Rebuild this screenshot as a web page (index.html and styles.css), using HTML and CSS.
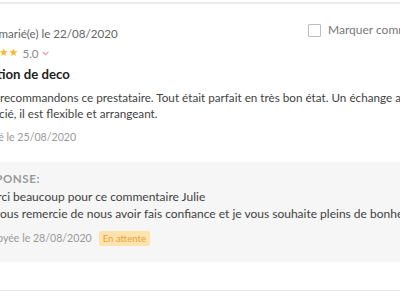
FILE: index.html
```html
<!DOCTYPE html>
<html lang="fr">
<head>
<meta charset="utf-8">
<link rel="stylesheet" href="styles.css">
</head>
<body>
<div class="page">
  <div class="review">
    <div class="header">
      <div class="meta">
        <div class="author">Julie, marié(e) le 22/08/2020</div>
        <div class="rating">
          <span class="stars">★★★★★</span>
          <span class="score">5.0</span>
          <svg class="chev" width="7" height="5" viewBox="0 0 7 5"><path d="M0.6 0.8l2.9 2.9 2.9-2.9" fill="none" stroke="#f095a0" stroke-width="1.1"/></svg>
        </div>
      </div>
      <label class="mark"><span class="box"></span><span>Marquer comme lu</span></label>
    </div>
    <h3 class="title">Location de deco</h3>
    <p class="body">Nous recommandons ce prestataire. Tout était parfait en très bon état. Un échange agréable et<br>apprécié, il est flexible et arrangeant.</p>
    <div class="sent">Envoyé le 25/08/2020</div>
    <div class="response">
      <div class="label">Réponse:</div>
      <p class="rtext first">Merci beaucoup pour ce commentaire Julie</p>
      <p class="rtext">Je vous remercie de nous avoir fais confiance et je vous souhaite pleins de bonheur</p>
      <div class="rsent"><span>Envoyée le 28/08/2020</span><span class="badge">En attente</span></div>
    </div>
  </div>
  <div class="review next"></div>
</div>
</body>
</html>
```
FILE: styles.css
```css
html, body { margin: 0; padding: 0; background: #fff; overflow: hidden; }
body { font-family: Lato, "Open Sans", sans-serif; font-size: 12px; color: #444; padding-top: 2px; }
.page { width: 760px; margin-left: -30px; }
.review { border-top: 2px solid #ededed; padding-top: 21px; }
.review.next { padding: 0; margin-top: 28px; border-top: 1px solid #e6e6e6; }
.header { display: grid; grid-template-columns: 338px 1fr; align-items: start; }
.author { line-height: 18px; color: #666; font-size: 11.6px; }
.rating { display: flex; align-items: center; height: 18px; margin-top: 1px; }
.stars { color: #f4bb2a; font-family: "DejaVu Sans", sans-serif; font-size: 10.8px; line-height: 18px; }
.score { color: #888; font-size: 11.6px; margin-left: 4px; }
.chev { margin-left: 3px; }
.mark { display: flex; align-items: center; gap: 7px; color: #777; font-size: 12px; margin-top: -3px; line-height: 16px; }
.box { width: 11px; height: 11px; border: 1px solid #bdbdbd; border-radius: 1px; background: #fff; }
.title { margin: 2px 0 0; font-size: 13.2px; line-height: 20px; font-weight: 700; color: #222; }
.body { margin: 5px 0 0; line-height: 16px; color: #3f3f3f; font-size: 11.7px; }
.sent { margin-top: 8px; line-height: 16px; color: #999; font-size: 10.6px; }
.response { background: #f6f6f6; margin-top: 17px; padding: 9px 10px 15px; }
.label { text-transform: uppercase; font-weight: 700; color: #999; font-size: 11.5px; letter-spacing: 0.6px; line-height: 16px; }
.rtext { margin: 0; line-height: 17px; color: #3f3f3f; white-space: nowrap; }
.rtext.first { margin-top: 1px; }
.rsent { display: flex; align-items: center; gap: 7px; margin-top: 7px; color: #999; height: 18px; font-size: 10.6px; }
.badge { background: #ffe3ad; color: #e2a440; border-radius: 2px; padding: 0 4px; line-height: 15px; font-size: 9.6px; }
```
